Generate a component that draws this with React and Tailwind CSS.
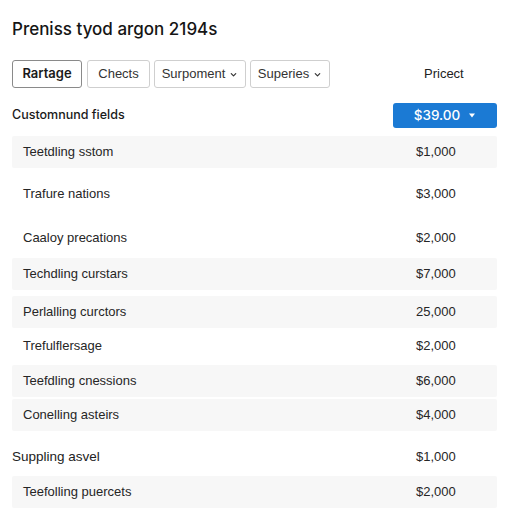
import React from 'react';

const rows = [
  { label: 'Teetdling sstom', price: '$1,000', gray: true, mt: 'mt-[8px]' },
  { label: 'Trafure nations', price: '$3,000', gray: false, mt: 'mt-[10px]' },
  { label: 'Caaloy precations', price: '$2,000', gray: false, mt: 'mt-[12px]' },
  { label: 'Techdling curstars', price: '$7,000', gray: true, mt: 'mt-[4px]' },
  { label: 'Perlalling curctors', price: '25,000', gray: true, mt: 'mt-[6px]' },
  { label: 'Trefulflersage', price: '$2,000', gray: false, mt: 'mt-[2px]' },
  { label: 'Teefdling cnessions', price: '$6,000', gray: true, mt: 'mt-[3px]' },
  { label: 'Conelling asteirs', price: '$4,000', gray: true, mt: 'mt-[2px]' },
];

const Chevron = () => (
  <svg className="ml-1 h-[9px] w-[9px]" viewBox="0 0 10 10" fill="none">
    <path d="M2.5 4l2.5 2.5L7.5 4" stroke="#333" strokeWidth="1.3" strokeLinecap="round" strokeLinejoin="round" />
  </svg>
);

const Row = ({ label, price, gray, mt }) => (
  <div className={`${mt} flex h-[32px] items-center rounded-[2px] ${gray ? 'bg-[#f7f7f7]' : ''}`}>
    <span className="flex-1 pl-[11px] text-[13px] text-[#262626]">{label}</span>
    <span className="w-[81px] text-[13px] text-[#262626]">{price}</span>
  </div>
);

const App = () => {
  return (
    <div className="h-[512px] w-[512px] overflow-hidden bg-white px-[12px] pt-[18px] font-['Liberation_Sans',Arial,sans-serif] text-[#1a1a1a]">
      <h1 className="font-['Inter',sans-serif] text-[17px] font-medium leading-[22px] text-[#151515]">
        Preniss tyod argon 2194s
      </h1>

      <div className="mt-[20px] flex h-[28px] items-center">
        <button className="h-[28px] w-[70px] rounded-[3px] border border-[#8a8a8a] font-['Inter',sans-serif] text-[13px] font-semibold text-[#1a1a1a]">
          Rartage
        </button>
        <button className="ml-[5px] h-[28px] w-[63px] rounded-[3px] border border-[#cfcfcf] text-[13px] text-[#333]">
          Chects
        </button>
        <button className="ml-[4px] flex h-[28px] w-[92px] items-center justify-center rounded-[3px] border border-[#cfcfcf] text-[13px] text-[#333]">
          Surpoment
          <Chevron />
        </button>
        <button className="ml-[4px] flex h-[28px] w-[80px] items-center justify-center rounded-[3px] border border-[#cfcfcf] text-[13px] text-[#333]">
          Superies
          <Chevron />
        </button>
        <span className="ml-[94px] text-[13px] text-[#222]">Pricect</span>
      </div>

      <div className="mt-[15px] flex h-[25px] items-center">
        <span className="flex-1 font-['Inter',sans-serif] text-[12.5px] font-medium text-[#1a1a1a]">Customnund fields</span>
        <button className="mr-[3px] flex h-[25px] w-[104px] items-center justify-center rounded-[3px] bg-[#1b7ad4] font-['Inter',sans-serif] text-[13.5px] font-medium text-white">
          $39.00
          <svg className="ml-[8px] h-[7px] w-[8px]" viewBox="0 0 8 6">
            <path d="M1 1h6L4 5z" fill="#fff" />
          </svg>
        </button>
      </div>

      <div className="mr-[3px] flex flex-col">
        {rows.map((r) => (
          <Row key={r.label} {...r} />
        ))}
        <div className="mt-[10px] flex h-[32px] items-center">
          <span className="flex-1 text-[13.5px] text-[#222]">Suppling asvel</span>
          <span className="w-[81px] text-[13px] text-[#262626]">$1,000</span>
        </div>
        <Row label="Teefolling puercets" price="$2,000" gray mt="mt-[3px]" />
      </div>
    </div>
  );
};

export default App;
